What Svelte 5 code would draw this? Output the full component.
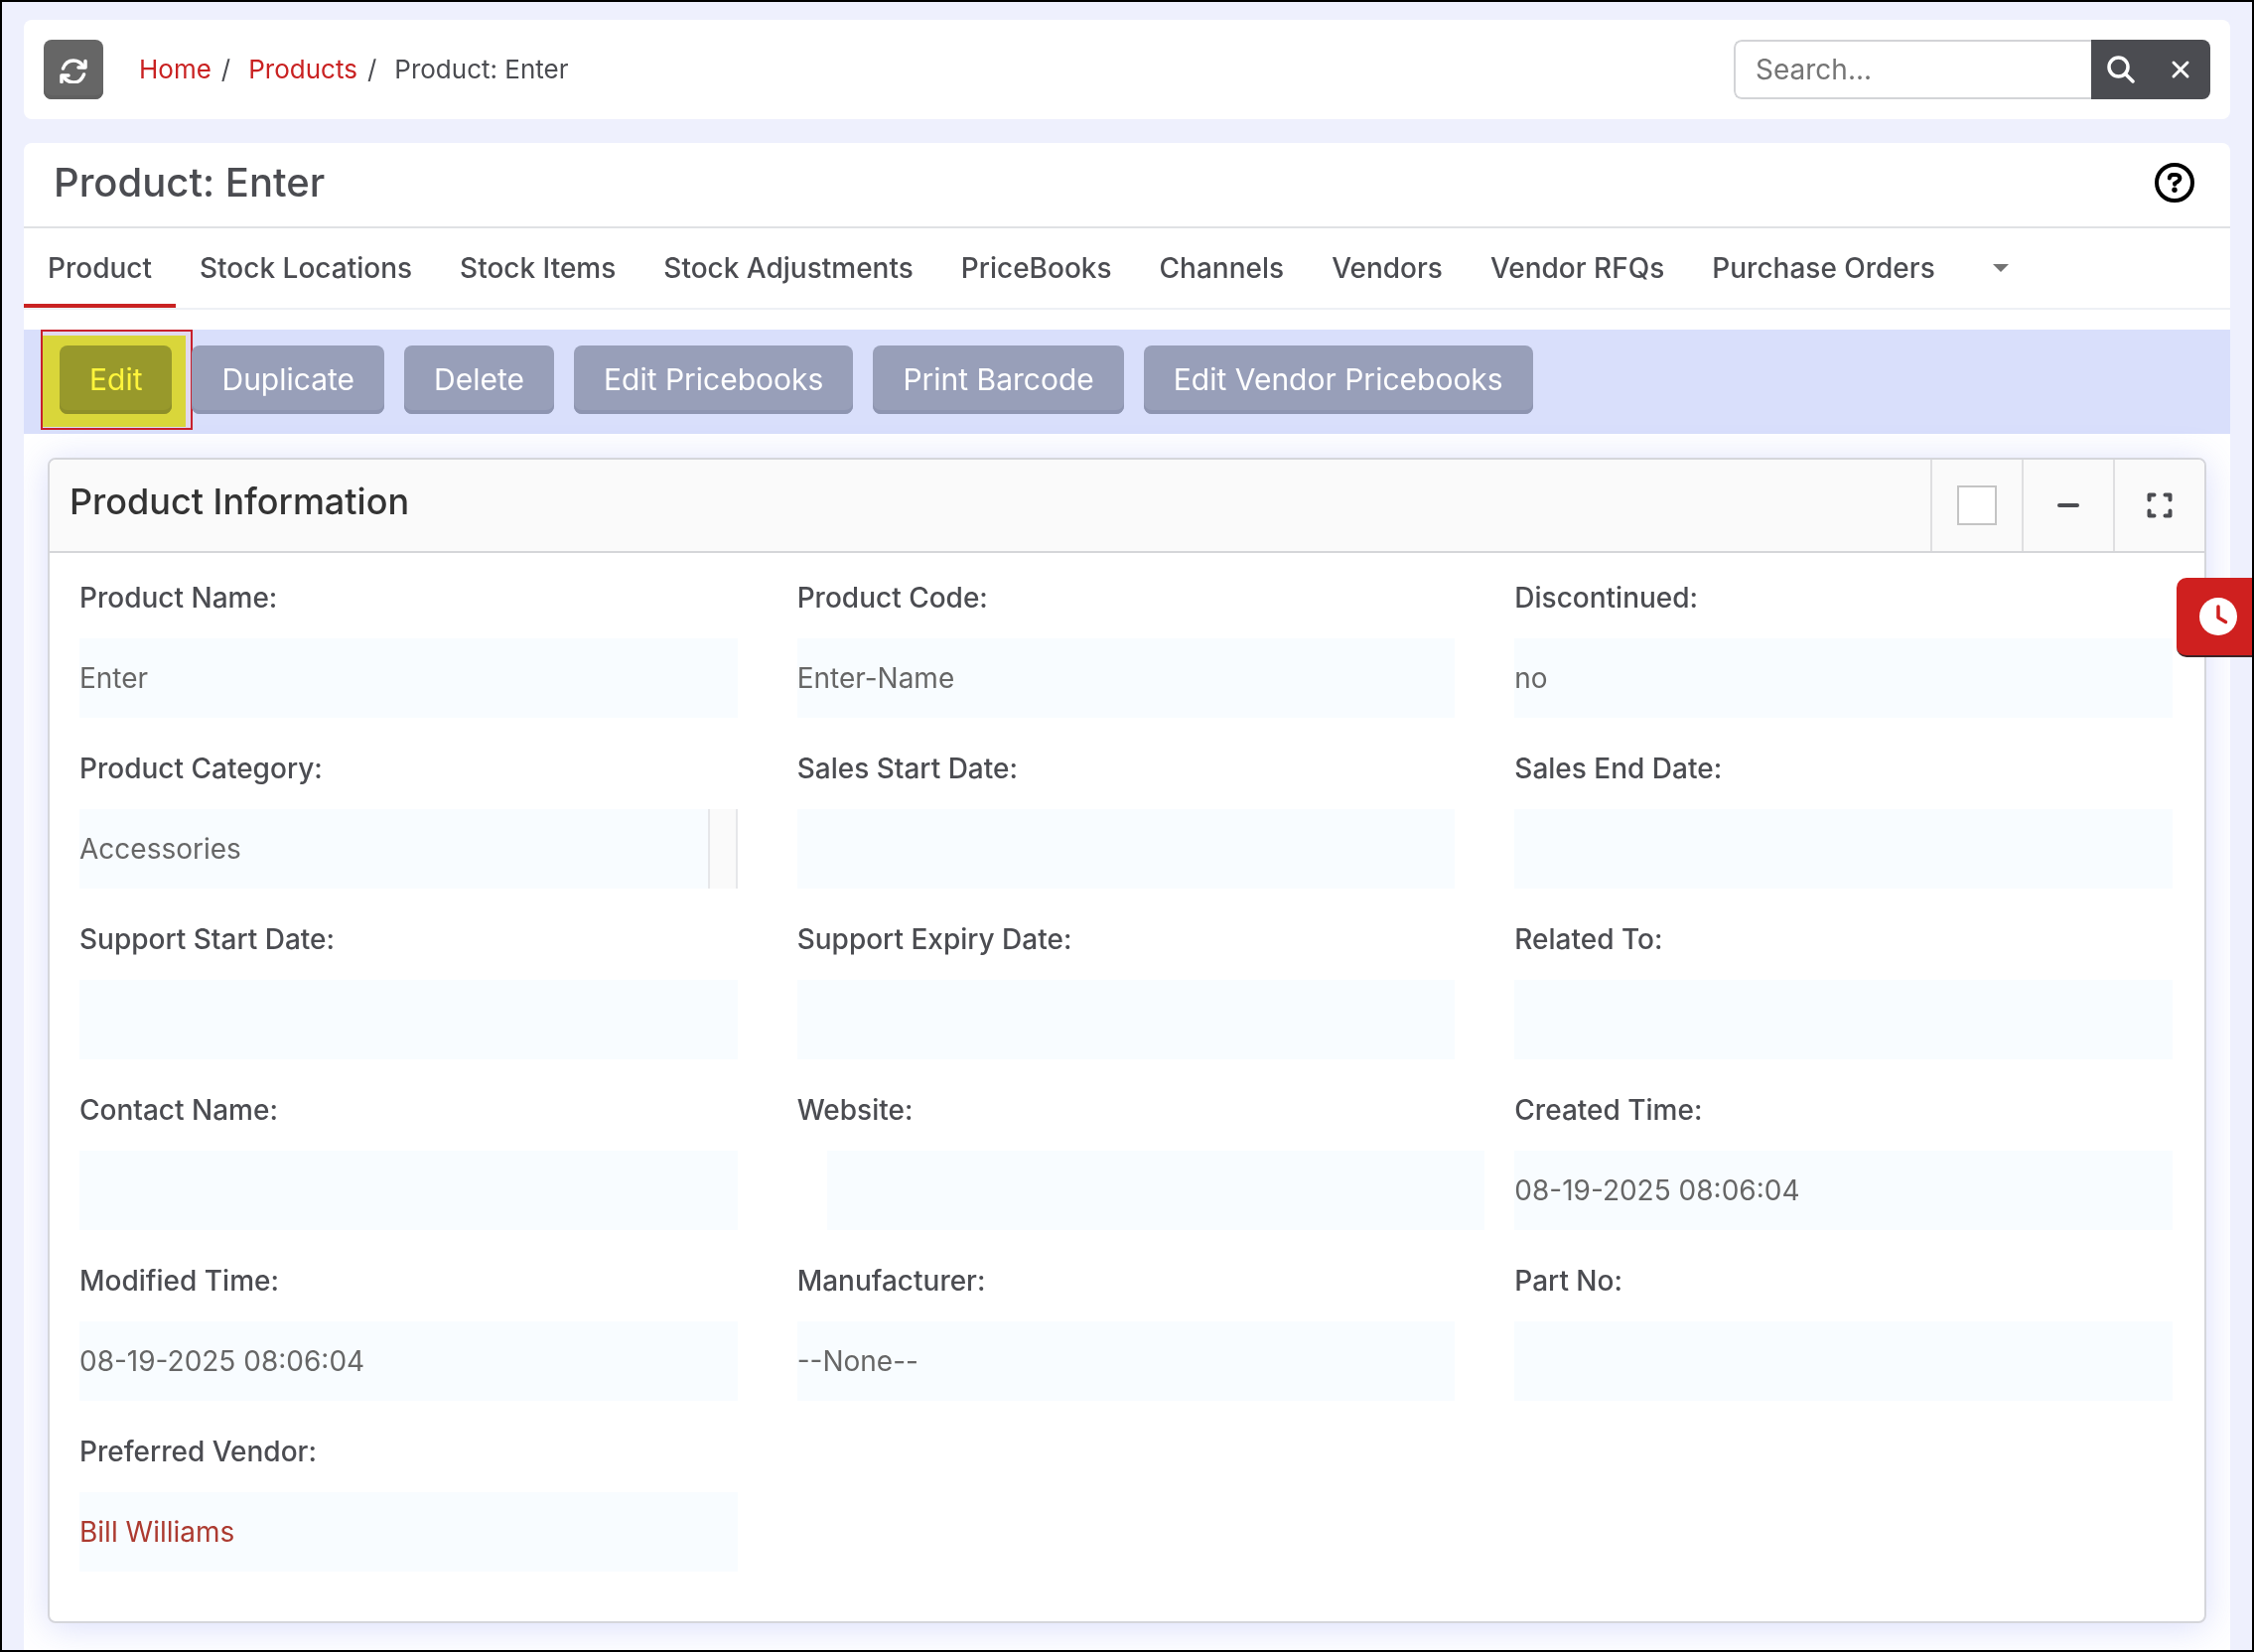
<script>
  const tabs = [
    'Product', 'Stock Locations', 'Stock Items', 'Stock Adjustments', 'PriceBooks',
    'Channels', 'Vendors', 'Vendor RFQs', 'Purchase Orders'
  ];

  const actions = ['Edit', 'Duplicate', 'Delete', 'Edit Pricebooks', 'Print Barcode', 'Edit Vendor Pricebooks'];

  const fields = [
    { id: 'name', label: 'Product Name', value: 'Enter' },
    { id: 'code', label: 'Product Code', value: 'Enter-Name' },
    { id: 'discontinued', label: 'Discontinued', value: 'no' },
    { id: 'category', label: 'Product Category', value: 'Accessories', addon: true },
    { id: 'sales-start', label: 'Sales Start Date', value: '' },
    { id: 'sales-end', label: 'Sales End Date', value: '' },
    { id: 'support-start', label: 'Support Start Date', value: '' },
    { id: 'support-expiry', label: 'Support Expiry Date', value: '' },
    { id: 'related', label: 'Related To', value: '' },
    { id: 'contact', label: 'Contact Name', value: '' },
    { id: 'website', label: 'Website', value: '', indent: true },
    { id: 'created', label: 'Created Time', value: '08-19-2025 08:06:04' },
    { id: 'modified', label: 'Modified Time', value: '08-19-2025 08:06:04' },
    { id: 'manufacturer', label: 'Manufacturer', value: '--None--' },
    { id: 'part', label: 'Part No', value: '' },
    { id: 'vendor', label: 'Preferred Vendor', value: 'Bill Williams', link: true }
  ];

  let activeTab = $state('Product');
  let collapsed = $state(false);
  let query = $state('');
</script>

<div class="page">
  <header class="topbar">
    <button class="refresh" aria-label="Refresh">
      <svg viewBox="0 0 28 28" width="28" height="28" fill="none" stroke="currentColor" stroke-width="3.500" stroke-linecap="round" stroke-linejoin="round">
        <path d="M3.500 13C5.500 7.500 9.500 5 14 5c4.500 0 8 2.500 10.500 6.500" />
        <path d="M24.500 19C22.500 24.500 18.500 27 14 27c-4.500 0-8-2.500-10.500-6.500" />
        <path d="M26 5.500V12h-7M2 26.500V20h7" />
      </svg>
    </button>
    <nav class="crumbs" aria-label="Breadcrumb">
      <a href="#home">Home</a><span class="sep">/</span>
      <a href="#products">Products</a><span class="sep">/</span>
      <span>Product: Enter</span>
    </nav>
    <form class="search" onsubmit={(e) => e.preventDefault()}>
      <input type="text" placeholder="Search..." aria-label="Search" bind:value={query} />
      <button type="submit" aria-label="Search">
        <svg viewBox="0 0 28 28" width="28" height="28" fill="none" stroke="currentColor" stroke-width="3.500" stroke-linecap="round">
          <circle cx="11.500" cy="11.500" r="9.500" />
          <path d="M18.500 18.500L26 26" />
        </svg>
      </button>
      <button type="button" aria-label="Clear" onclick={() => (query = '')}>
        <svg viewBox="0 0 20 20" width="20" height="20" stroke="currentColor" stroke-width="3" stroke-linecap="round">
          <path d="M3 3l14 14M17 3L3 17" />
        </svg>
      </button>
    </form>
  </header>

  <main class="card">
    <div class="title">
      <h1>Product: Enter</h1>
      <button class="help" aria-label="Help">
        <svg viewBox="0 0 40 40" width="40" height="40" fill="none" stroke="currentColor" stroke-width="4" stroke-linecap="round">
          <circle cx="20" cy="20" r="18" />
          <path d="M14.800 15.500c0-2.500 1.700-3.600 4-3.600h2.600c2.300 0 4 1.600 4 3.700 0 1.500-.8 2.500-2 3.200l-3.300 2v1" />
          <circle cx="20" cy="27.300" r="2.700" fill="currentColor" stroke="none" />
        </svg>
      </button>
    </div>

    <div class="tabs" role="tablist">
      {#each tabs as tab}
        <button
          role="tab"
          class="tab"
          class:active={activeTab === tab}
          aria-selected={activeTab === tab}
          onclick={() => (activeTab = tab)}
        >{tab}</button>
      {/each}
      <button class="tab more" aria-label="More tabs">
        <svg viewBox="0 0 16 8" width="16" height="8"><path d="M0 0h16L8 8z" fill="#737373" /></svg>
      </button>
    </div>

    <div class="toolbar">
      {#each actions as action, i}
        <div class="slot">
          <button class="action">{action}</button>
          {#if i === 0}
            <div class="marker"></div>
            <div class="outline"></div>
          {/if}
        </div>
      {/each}
    </div>

    <section class="panel">
      <div class="panel-head">
        <h2>Product Information</h2>
        <label class="tool">
          <input type="checkbox" aria-label="Select Product Information" />
        </label>
        <button class="tool" aria-label="Collapse" onclick={() => (collapsed = !collapsed)}>
          <svg viewBox="0 0 24 24" width="24" height="24" stroke="currentColor" stroke-width="4" stroke-linecap="round">
            <path d="M3 12h18" />
          </svg>
        </button>
        <button class="tool" aria-label="Full screen">
          <svg viewBox="0 0 26 26" width="26" height="26" fill="none" stroke="currentColor" stroke-width="4" stroke-linecap="round" stroke-linejoin="round">
            <path d="M7.500 2.500h-5v5M18.500 2.500h5v5M7.500 23.500h-5v-5M18.500 23.500h5v-5" />
          </svg>
        </button>
      </div>

      {#if !collapsed}
        <div class="fields">
          {#each fields as field}
            <div class="field">
              {#if field.link}
                <span class="label">{field.label}:</span>
                <div class="value"><a href="#vendor">{field.value}</a></div>
              {:else}
                <label class="label" for={field.id}>{field.label}:</label>
                <div class="value" class:indent={field.indent}>
                  <input id={field.id} type="text" value={field.value} readonly />
                  {#if field.addon}<span class="addon"></span>{/if}
                </div>
              {/if}
            </div>
          {/each}
        </div>
      {/if}
    </section>
  </main>

  <button class="recent" aria-label="Recently viewed">
    <svg viewBox="0 0 38 38" width="38" height="38" fill="none">
      <circle cx="19" cy="19" r="19" fill="#fff" />
      <path d="M19 9v11l7.500 4.500" stroke="#cf201f" stroke-width="3.500" stroke-linecap="round" stroke-linejoin="round" />
    </svg>
  </button>
</div>

<style>
  :global(body) {
    margin: 0;
  }
  .page,
  .page * {
    box-sizing: border-box;
  }
  .page {
    position: relative;
    display: flex;
    flex-direction: column;
    gap: 24px;
    min-height: 100vh;
    padding: 18px 22px 0;
    border: 2px solid #000;
    background: #eef0fd;
    color: #4b4c51;
    font-family: Inter, 'Liberation Sans', sans-serif;
    font-size: 28px;
    line-height: 40px;
  }
  button,
  input {
    margin: 0;
    font: inherit;
    color: inherit;
  }
  button {
    display: flex;
    align-items: center;
    justify-content: center;
    padding: 0;
    border: 0;
    background: none;
    cursor: pointer;
  }
  a {
    color: #c92222;
    text-decoration: none;
  }
  h1,
  h2 {
    margin: 0;
    font-weight: 500;
  }

  .topbar {
    display: flex;
    align-items: center;
    height: 100px;
    padding: 0 20px;
    border-radius: 8px;
    background: #fff;
  }
  .refresh {
    width: 60px;
    height: 60px;
    border-radius: 8px;
    background: #666;
    box-shadow: inset 0 -4px 0 #606060;
    color: #fff;
  }
  .crumbs {
    display: flex;
    align-items: center;
    margin-left: 36px;
    font-size: 26px;
  }
  .sep {
    margin: 0 18px 0 10px;
  }
  .search {
    display: flex;
    width: 480px;
    height: 60px;
    margin-left: auto;
    border-radius: 8px;
    overflow: hidden;
  }
  .search input {
    flex: 1;
    min-width: 0;
    padding: 0 20px;
    border: 2px solid #d3d4d7;
    border-right: 0;
    border-radius: 8px 0 0 8px;
    outline: 0;
  }
  .search input::placeholder {
    color: #757575;
    opacity: 1;
  }
  .search button {
    width: 60px;
    background: #4b4c51;
    color: #fff;
  }

  .card {
    flex: 1;
    padding-bottom: 27px;
    border-radius: 8px 8px 0 0;
    background: #fff;
    overflow: hidden;
  }
  .title {
    display: flex;
    align-items: center;
    justify-content: space-between;
    height: 86px;
    padding: 0 36px 4px 30px;
    border-bottom: 2px solid #e0e1e4;
  }
  .title h1 {
    font-size: 40px;
    line-height: 48px;
  }
  .help {
    color: #000;
  }

  .tabs {
    display: flex;
    height: 82px;
    border-bottom: 2px solid #eef0f5;
  }
  .tab {
    padding: 4px 24px 0;
    border-bottom: 4px solid transparent;
    font-weight: 500;
  }
  .tab.active {
    border-bottom-color: #c92222;
  }
  .more {
    margin-left: 10px;
  }

  .toolbar {
    display: flex;
    gap: 20px;
    margin-top: 20px;
    padding: 16px 36px 20px;
    background: #d9dffb;
  }
  .slot {
    position: relative;
  }
  .action {
    height: 69px;
    padding: 0 30px 2px;
    border-radius: 8px;
    background: #989fb9;
    box-shadow: inset 0 -4px 0 #8e95b1;
    color: #fff;
    font-size: 30px;
  }
  /* marks the first action */
  .outline,
  .marker {
    position: absolute;
    top: -16px;
    left: -19px;
    pointer-events: none;
  }
  .outline {
    right: -21px;
    bottom: -16px;
    border: 2px solid #c8202c;
    box-shadow: inset -5px 4px 0 rgba(255, 200, 200, 0.25);
  }
  .marker {
    top: -10px;
    right: -14px;
    bottom: -13px;
    background: #fff53b;
    mix-blend-mode: multiply;
  }

  .panel {
    margin: 24px 24px 0;
    border: 2px solid #d5d6db;
    border-radius: 8px;
    background: #fff;
    box-shadow: 0 4px 36px rgba(80, 100, 235, 0.22);
  }
  .panel-head {
    display: flex;
    border-bottom: 2px solid #d5d6d9;
    border-radius: 6px 6px 0 0;
    background: #fafafa;
  }
  .panel-head h2 {
    flex: 1;
    padding: 18px 20px;
    color: #333;
    font-size: 36px;
    line-height: 48px;
  }
  .tool {
    display: flex;
    align-items: center;
    justify-content: center;
    width: 92px;
    height: 92px;
    border-left: 2px solid #dfdfe1;
  }
  .tool input {
    appearance: none;
    width: 40px;
    height: 40px;
    border: 2px solid #c4c4c4;
    background: #fff;
  }

  .fields {
    display: grid;
    grid-template-columns: repeat(3, 1fr);
    gap: 31px 60px;
    padding: 25px 32px 50px 30px;
  }
  .field {
    display: flex;
    flex-direction: column;
    gap: 21px;
  }
  .label {
    font-weight: 500;
  }
  .value {
    display: flex;
    align-items: center;
    height: 80px;
    background: #f8fcff;
    color: #666;
  }
  .value.indent {
    margin: 0 -30px 0 30px;
  }
  .value input {
    flex: 1;
    min-width: 0;
    height: 100%;
    padding: 0;
    border: 0;
    outline: 0;
    background: transparent;
  }
  .value a {
    color: #ac3a30;
  }
  .addon {
    width: 30px;
    height: 100%;
    border: solid #e6e7ea;
    border-width: 0 2px;
    background: #fafafa;
  }

  .recent {
    position: absolute;
    top: 580px;
    right: 0;
    width: 76px;
    height: 80px;
    padding-left: 8px;
    border-bottom: 2px solid #3c2426;
    border-radius: 10px 0 0 10px;
    background: #cf201f;
  }
</style>
